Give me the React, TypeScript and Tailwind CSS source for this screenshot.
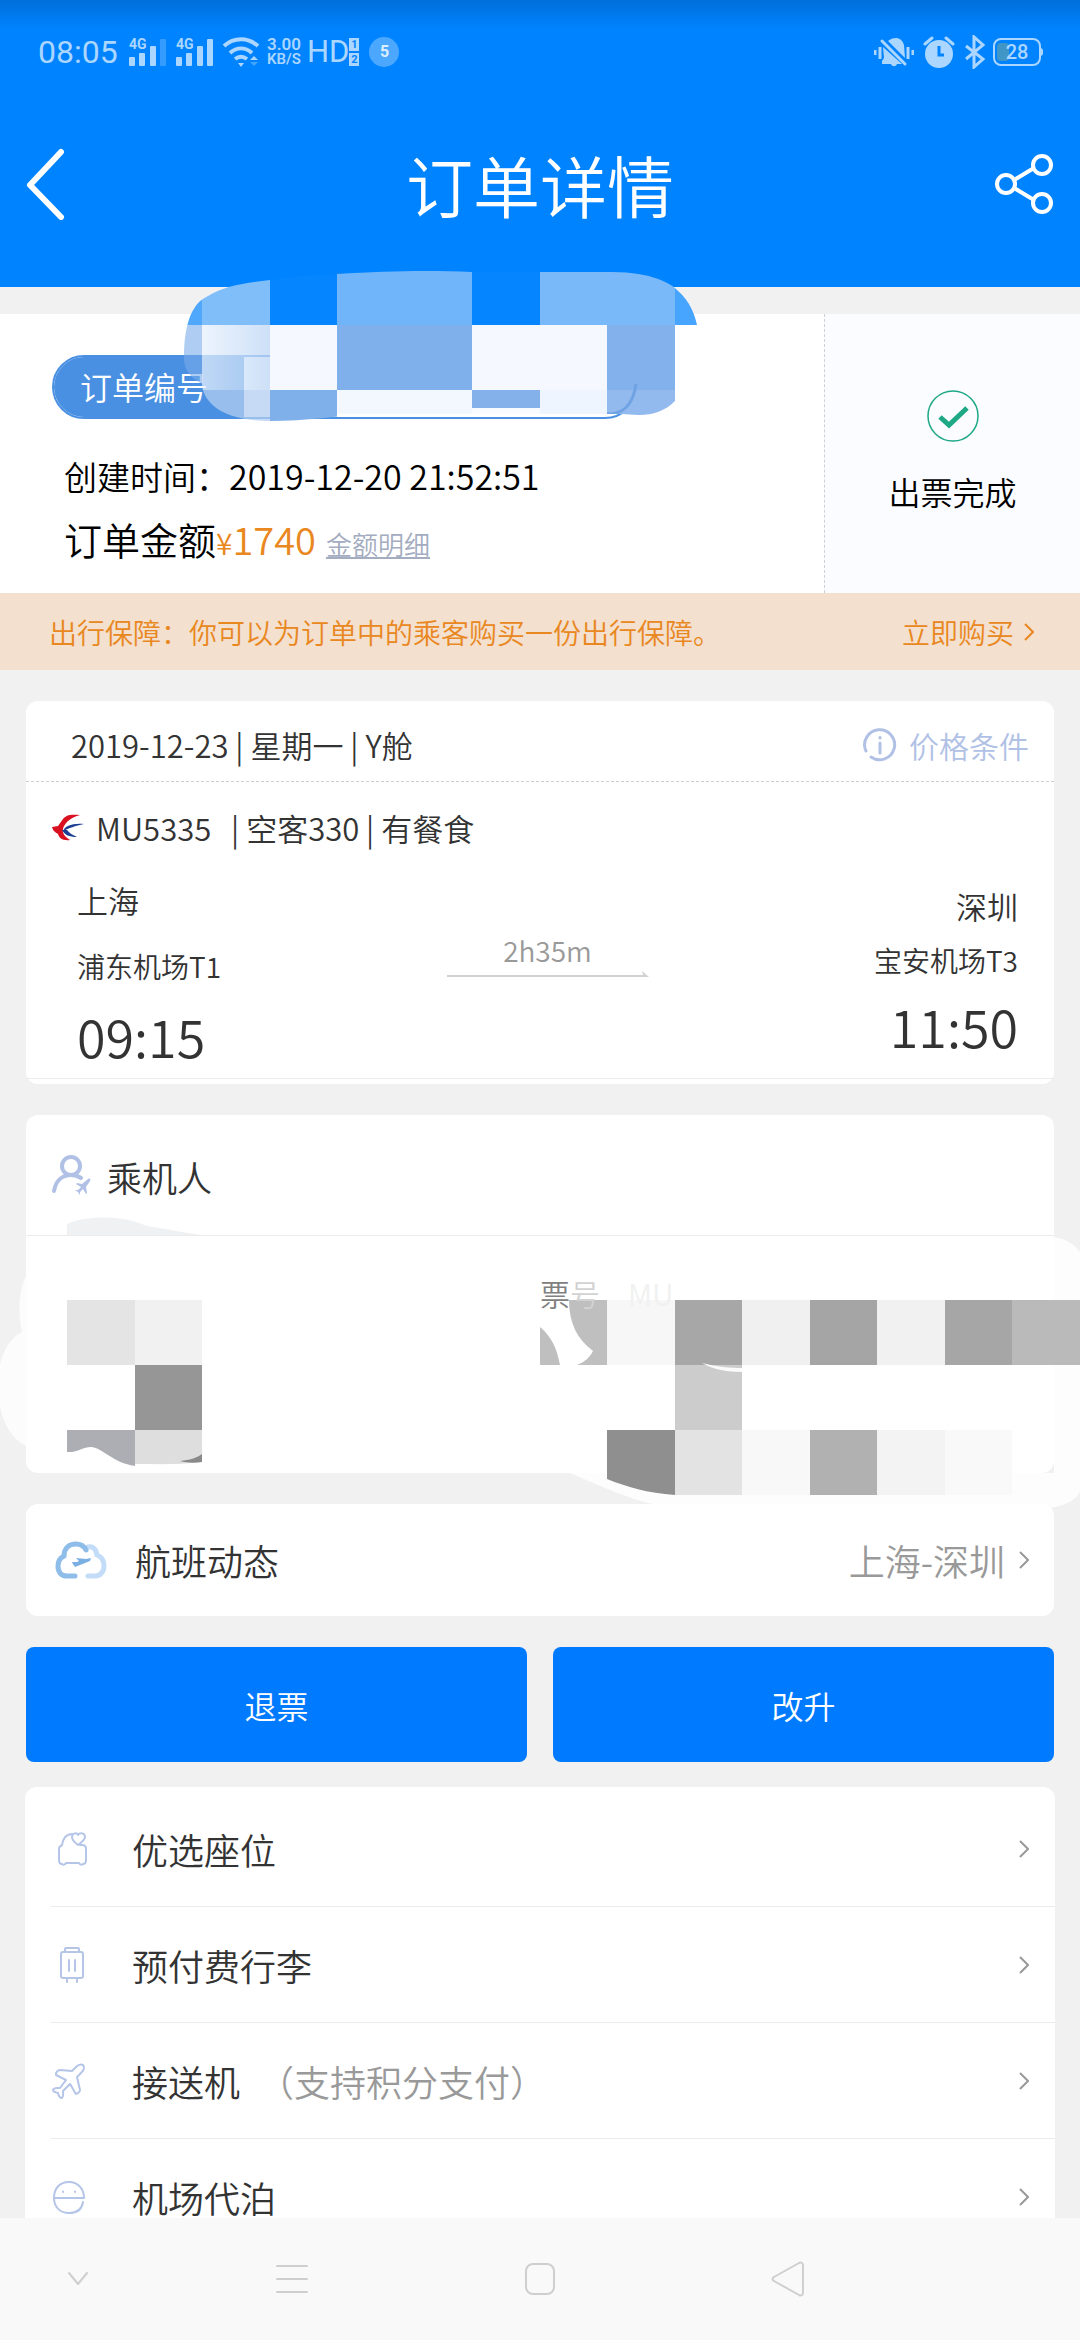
import React from 'react';

interface ServiceItem {
  label: string;
  note?: string;
  icon: React.ReactNode;
}

const iconStroke = {
  fill: 'none',
  stroke: 'currentColor',
  strokeWidth: 2,
  strokeLinecap: 'round' as const,
  strokeLinejoin: 'round' as const,
};

const SeatIcon = () => (
  <svg viewBox="-3 0 36 40" className="h-10 w-9" {...iconStroke}>
    <path d="M18 5c-6 0-9 5-10 11-2 1-3 2-3 4v11c0 2 1 4 3 4 1 1 3 1 4-1h13c1 2 3 2 4 1 2 0 3-2 3-4V20c0-3-2-4-4-4h-2" />
    <path d="M24 16c-4-3-6-5-6-8 0-4 5-5 6-2 2-3 7-2 7 2 0 3-3 5-7 8z" />
  </svg>
);

const LuggageIcon = () => (
  <svg viewBox="-3 0 36 40" className="h-10 w-9" {...iconStroke}>
    <rect x="7" y="7" width="22" height="26" rx="2" />
    <path d="M11 7V4c0-1 1-1 1-1h12s1 0 1 1v3M15 15v11M21 15v11M13 34v3M23 34v3" />
  </svg>
);

const PlaneIcon = () => (
  <svg viewBox="0 0 36 40" className="h-10 w-9" {...iconStroke}>
    <path d="M21 10l4-4c3-3 5-3 7-2 2 2 1 5-2 8l-4 4 3 13c0 2-3 4-4 4-1-1-5-9-6-10l-7 7c0 3 1 5-1 7-3 0-4-5-4-5s-5-1-5-3c1-3 4-2 7-2l6-8-10-5c-1-2 2-5 4-5z" />
  </svg>
);

const ParkingIcon = () => (
  <svg viewBox="0 0 36 40" className="h-10 w-9" {...iconStroke}>
    <path d="M33 21H3C3 11 9 5 18 5s15 7 15 16M3 21c0 9 6 15 15 15 8 0 13-4 14-11" />
    <path d="M12 14.5v.5M24 14.5v.5" />
  </svg>
);

const services: ServiceItem[] = [
  { label: '优选座位', icon: <SeatIcon /> },
  { label: '预付费行李', icon: <LuggageIcon /> },
  { label: '接送机', note: '（支持积分支付）', icon: <PlaneIcon /> },
  { label: '机场代泊', icon: <ParkingIcon /> },
];

const Chevron = ({ className }: { className: string }) => (
  <svg viewBox="0 0 10 18" className={className} fill="none" stroke="currentColor" strokeWidth="2">
    <path d="M1 1l8 8-8 8" />
  </svg>
);

const Signal = ({ weak }: { weak?: boolean }) => (
  <svg viewBox="0 0 38 30" className="h-[30px] w-[38px]" fill="currentColor">
    <text x="0" y="12" fontSize="14" fontWeight="700" fontFamily="Roboto, sans-serif">4G</text>
    <rect x="0" y="20" width="6" height="9" rx="1" />
    <rect x="10" y="16" width="6" height="13" rx="1" />
    <rect x="21" y="9" width="6" height="20" rx="1" />
    <rect x="31" y="2" width="6" height="27" rx="1" opacity={weak ? 0.3 : 1} />
  </svg>
);

const StatusBar = () => (
  <div className="flex h-[104px] items-center justify-between pr-[39px] pl-[38px] font-[Roboto,sans-serif] text-[#abd6ff]">
    <div className="flex items-center">
      <span className="w-[91px] text-[32px] leading-8">08:05</span>
      <Signal weak />
      <span className="w-[9px]" />
      <Signal />
      <svg viewBox="0 0 38 32" className="ml-2 h-8 w-[38px]" fill="none" stroke="currentColor" strokeWidth="4">
        <path d="M2 10c10-9 24-9 34 0M8 17c7-6 15-6 22 0M13 23c4-3 8-3 12 0" />
        <path d="M16 27h6l-3 4z" fill="currentColor" stroke="none" />
        <path d="M28 24l4-4 4 4z" fill="currentColor" stroke="none" />
        <path d="M28 26l4 4 4-4z" fill="currentColor" stroke="none" opacity="0.4" />
      </svg>
      <span className="ml-[6px] flex w-9 flex-col text-center text-[15px] leading-[15px] font-semibold">
        <span className="text-[17px] leading-[15px]">3.00</span>
        <span>KB/S</span>
      </span>
      <span className="ml-[5px] text-[31px] leading-8">HD</span>
      <span className="flex flex-col gap-[2px] text-[11px] leading-[13px] font-bold text-[#0083ff]">
        <span className="w-[10px] bg-[#abd6ff] text-center">1</span>
        <span className="w-[10px] bg-[#abd6ff] text-center">2</span>
      </span>
      <span className="ml-[10px] flex h-[30px] w-[30px] items-center justify-center rounded-full bg-[#4ca8ff] text-base font-bold text-[#dcefff]">5</span>
    </div>
    <div className="flex items-center">
      <svg viewBox="0 0 40 34" className="h-[34px] w-10" fill="currentColor">
        <path d="M14 6c6-5 14-4 16 4l1 13zM9 12l19 17h-5c-1 3-5 3-6 0H8v-3l2-3z" />
        <path d="M8 6l23 23" stroke="currentColor" strokeWidth="3" strokeLinecap="round" />
        <path d="M1 15v5M6 12v12M34 12v12M39 15v5" stroke="currentColor" strokeWidth="3" />
      </svg>
      <svg viewBox="0 0 32 34" className="ml-[9px] h-[34px] w-8" fill="currentColor">
        <circle cx="16" cy="19" r="14" />
        <path d="M2 9l7-6M30 9l-7-6" stroke="currentColor" strokeWidth="3" strokeLinecap="round" />
        <path d="M16 11v9h5" fill="none" stroke="#0083ff" strokeWidth="3" />
      </svg>
      <svg viewBox="0 0 22 34" className="ml-[9px] h-[34px] w-[22px]" fill="none" stroke="currentColor" strokeWidth="3">
        <path d="M2 11l17 13-9 8V2l9 8L2 24" />
      </svg>
      <span className="relative ml-[7px] flex h-7 w-12 items-center justify-center rounded-lg border-2 border-current text-xl leading-5 font-medium">
        <span className="absolute top-[3px] left-[2px] h-[18px] w-3 rounded bg-[#4196c8]" />
        <span className="relative">28</span>
        <span className="absolute top-2 -right-1 h-2 w-[3px] rounded-r bg-current" />
      </span>
    </div>
  </div>
);

const Header = () => (
  <header className="h-[287px] shrink-0 bg-[#0083ff] bg-linear-to-b from-[#006fdb] via-[#0083ff] via-10% to-[#0083ff] text-white">
    <StatusBar />
    <div className="grid h-[160px] grid-cols-[1fr_auto_1fr] items-center px-[26px]">
      <button aria-label="返回" className="w-10">
        <svg viewBox="0 0 40 72" className="h-[72px] w-10" fill="none" stroke="currentColor" strokeWidth="6" strokeLinecap="round" strokeLinejoin="round">
          <path d="M35 4L4 37l31 32" />
        </svg>
      </button>
      <h1 className="text-[67px] leading-[80px] font-[350]">订单详情</h1>
      <button aria-label="分享" className="justify-self-end">
        <svg viewBox="0 0 60 62" className="h-[62px] w-[60px]" fill="none" stroke="currentColor" strokeWidth="4">
          <circle cx="12" cy="31" r="9" />
          <circle cx="48" cy="12" r="9" />
          <circle cx="48" cy="50" r="9" />
          <path d="M20 27l20-12M20 35l20 12" />
        </svg>
      </button>
    </div>
  </header>
);

// Mosaic covering the order number
const OrderMask = () => (
  <svg viewBox="180 260 530 170" className="absolute -top-[54px] left-[180px] h-[170px] w-[530px]">
    <defs>
      <clipPath id="orderBrush">
        <path d="M184 358c0-30 6-54 24-62 16-10 36-13 62-16 24-4 42-5 67-6 50-3 90-4 135-2h140c40 0 60 12 65 18 14 12 18 26 20 35h-22v76c-10 10-22 14-36 14-14-1-20-1-32-1H367c-30 2-60 7-97 7-50 0-67-20-68-37-14-8-18-16-18-26z" />
      </clipPath>
      <linearGradient id="orderFade">
        <stop offset="0" stopColor="#e6f0fc" />
        <stop offset="1" stopColor="#bdd6f5" />
      </linearGradient>
    </defs>
    <g clipPath="url(#orderBrush)">
      <rect x="180" y="260" width="22" height="65" fill="#4fa8fb" />
      <rect x="202" y="260" width="68" height="65" fill="#80bef9" />
      <rect x="270" y="260" width="67" height="65" fill="#0585ff" />
      <rect x="337" y="260" width="135" height="65" fill="#70b5fa" />
      <rect x="472" y="260" width="68" height="65" fill="#0585ff" />
      <rect x="540" y="260" width="135" height="65" fill="#79b9fa" />
      <rect x="675" y="260" width="30" height="65" fill="#47a5ff" />
      <rect x="180" y="325" width="22" height="65" fill="#7aabe9" opacity="0.6" />
      <rect x="202" y="325" width="68" height="65" fill="url(#orderFade)" opacity="0.75" />
      <rect x="270" y="325" width="67" height="65" fill="#f5f9ff" />
      <rect x="337" y="325" width="135" height="65" fill="#7fb0eb" />
      <rect x="472" y="325" width="135" height="65" fill="#f5f8fe" />
      <rect x="607" y="325" width="68" height="65" fill="#82b1eb" />
      <rect x="202" y="390" width="68" height="40" fill="#b3cef2" opacity="0.75" />
      <rect x="270" y="390" width="67" height="40" fill="#7fb0ea" />
      <rect x="337" y="390" width="135" height="24" fill="#f3f8ff" />
      <rect x="472" y="390" width="68" height="18" fill="#84b1ea" />
      <rect x="472" y="408" width="68" height="6" fill="#f8fbff" />
      <rect x="540" y="390" width="67" height="24" fill="#eff5fe" />
      <rect x="607" y="390" width="68" height="28" fill="#92baee" />
      <path d="M607 414c16 0 26-8 29-30" fill="none" stroke="#6fa3e4" strokeWidth="3" />
    </g>
  </svg>
);

const OrderSummary = () => (
  <section className="relative mt-[27px] flex bg-white text-black">
    <div className="min-w-0 flex-1 pt-[41px] pb-[21px] pl-[52px]">
      <div className="flex h-16 w-[585px] overflow-hidden rounded-full border-2 border-[#4a90e2]">
        <span className="w-[190px] bg-[#4a90e2] pl-[26px] text-[32px] leading-[58px] font-[350] text-white">订单编号</span>
      </div>
      <p className="mt-[33px] pl-3 text-[33px] leading-[48px] font-[350]">
        创建时间：<time className="text-[34px]">2019-12-20 21:52:51</time>
      </p>
      <p className="mt-[11px] flex items-baseline pl-3 text-[38px] leading-[56px] font-[350]">
        订单金额
        <span className="text-[30px] text-[#e98720]">¥</span>
        <span className="text-[38px] text-[#e98720]">1740</span>
        <a href="#amount" className="ml-[10px] text-[26px] text-[#a3acc0] underline">金额明细</a>
      </p>
    </div>
    <div className="flex w-64 flex-col items-center border-l border-dashed border-[#cfd0d6] bg-[#fbfcff] pt-[75px]">
      <svg viewBox="0 0 54 54" className="h-[54px] w-[54px]" fill="none" stroke="#1fa886">
        <circle cx="27" cy="27" r="25" strokeWidth="1.5" />
        <path d="M14 28l9 8 18-17" strokeWidth="5" />
      </svg>
      <p className="mt-6 text-[32px] leading-[48px] font-[350]">出票完成</p>
    </div>
    <OrderMask />
  </section>
);

const FlightCard = () => (
  <section className="mx-[26px] mt-[31px] rounded-xl bg-white pb-[5px] font-[350] text-[#333]">
    <div className="flex h-[81px] items-center justify-between border-b border-dashed border-[#cfcfcf] pt-2 pr-[25px] pl-[45px]">
      <p className="text-[31px]">2019-12-23 | 星期一 | Y舱</p>
      <a href="#rules" className="flex items-center gap-3 text-[30px] text-[#b0c1e5]">
        <svg viewBox="0 0 34 34" className="h-[34px] w-[34px]" fill="none" stroke="currentColor" strokeWidth="3" strokeLinecap="round">
          <path d="M3 23a15 15 0 1 1 5 6" />
          <path d="M17 15v10M17 9.5v.5" />
        </svg>
        价格条件
      </a>
    </div>
    <div className="flex h-[92px] items-center pl-[26px] text-[31px]">
      <svg viewBox="0 0 32 28" className="h-7 w-8">
        <path d="M28 1C18 0 14 1 11 5l-5 7-6 1c1 4 3 5 6 7 1 4 5 7 12 6-5-3-8-7-7-11 1-5 6-11 17-14z" fill="#d8101f" />
        <path d="M32 10c-12-1-19 2-21 7 6-3 12-5 21-7z" fill="#1c3f94" />
        <path d="M10 16c3 5 7 7 15 7-4-2-8-4-10-7z" fill="#1c3f94" />
      </svg>
      <span className="ml-3 w-[135px]">MU5335</span>
      <span>| 空客330 | 有餐食</span>
    </div>
    <div className="grid grid-cols-[1fr_202px_1fr] pr-9 pb-3 pl-[51px]">
      <div className="pt-1">
        <p className="text-[31px] leading-[44px]">上海</p>
        <p className="mt-6 text-[28px] leading-10">浦东机场T1</p>
        <p className="mt-5 text-[52px] leading-[60px]">09:15</p>
      </div>
      <div className="pt-14 text-center text-[#999]">
        <p className="text-[28px] leading-10">2h35m</p>
        <svg viewBox="0 0 202 8" className="h-2 w-full" fill="#d2d2d2">
          <path d="M0 5h196l-1-4 7 6H0z" />
        </svg>
      </div>
      <div className="pt-[10px] text-right">
        <p className="text-[31px] leading-[44px]">深圳</p>
        <p className="mt-3 text-[28px] leading-10">宝安机场T3</p>
        <p className="mt-4 text-[52px] leading-[60px]">11:50</p>
      </div>
    </div>
    <hr className="border-[#ececec]" />
  </section>
);

// Mosaic covering the passenger's personal data
const PassengerMask = () => (
  <svg viewBox="0 1210 1080 300" className="absolute top-[95px] left-0 h-[300px] w-full">
    <path d="M26 1276c-8 16-8 40-4 56-34 16-32 98 4 114z" fill="#fff" opacity="0.75" />
    <path d="M1054 1237c12 2 20 7 26 15v240c-8 14-30 18-60 18H700c-50 0-90-20-130-37h484z" fill="#fff" opacity="0.85" />
    <path d="M67 1224c20-10 60-8 80 2 25 4 38 7 55 9H67z" fill="#f0f1f3" />
    <rect x="67" y="1300" width="68" height="65" fill="#e4e4e4" />
    <rect x="135" y="1300" width="67" height="65" fill="#f1f1f1" />
    <rect x="135" y="1365" width="67" height="65" fill="#969696" />
    <path d="M67 1430h68v36c-22-3-32-18-44-19-8 0-14 6-24 5z" fill="#adaeb4" />
    <path d="M135 1430h67v32c-24 3-45 2-67 2z" fill="#dedede" />
    <path d="M180 1461c10-1 16-3 22-7v8c-8 1-15 1-22-1z" fill="#8a8a8a" />
    <path d="M540 1327c12 10 17 22 20 38h-20zM569 1300h38v65h-30c8-3 13-8 16-14-16-12-24-28-24-51z" fill="#bfbfbf" />
    <rect x="607" y="1300" width="68" height="65" fill="#f7f7f7" />
    <rect x="675" y="1300" width="67" height="65" fill="#a7a7a7" />
    <rect x="742" y="1300" width="68" height="65" fill="#f0f0f0" />
    <rect x="810" y="1300" width="67" height="65" fill="#a5a5a5" />
    <rect x="877" y="1300" width="68" height="65" fill="#f1f1f1" />
    <rect x="945" y="1300" width="67" height="65" fill="#a6a6a6" />
    <rect x="1012" y="1300" width="68" height="65" fill="#bababa" />
    <rect x="675" y="1365" width="67" height="65" fill="#cccccc" />
    <path d="M702 1363c15 4 28 5 40 5v4c-16 0-30-3-40-9z" fill="#fafafa" />
    <path d="M607 1430h68v65c-28-2-48-8-68-16z" fill="#8f8f8f" />
    <rect x="675" y="1430" width="67" height="65" fill="#e3e3e3" />
    <rect x="742" y="1430" width="68" height="65" fill="#f8f8f8" />
    <rect x="810" y="1430" width="67" height="65" fill="#b1b1b1" />
    <rect x="877" y="1430" width="68" height="65" fill="#f3f3f3" />
    <rect x="945" y="1430" width="67" height="65" fill="#f9f9f9" />
  </svg>
);

const PassengerCard = () => (
  <section className="relative mt-[31px] px-[26px] font-[350]">
    <div className="rounded-xl bg-white">
      <div className="flex h-[121px] items-center border-b border-[#ececec] pl-[25px]">
        <svg viewBox="0 0 42 42" className="h-[42px] w-[42px] text-[#b0c1e5]" fill="none" stroke="currentColor" strokeWidth="4" strokeLinecap="round">
          <circle cx="20" cy="12" r="9" />
          <path d="M3 37c2-11 9-16 17-16 4 0 7 1 10 3" />
          <path d="M26 29l5 1 6-5c2-1 3 0 2 2l-4 6 1 6-1 1-3-5-3 3v3l-2-3-3-2h3l3-3-5-3z" fill="currentColor" stroke="none" />
        </svg>
        <h2 className="ml-[14px] pt-1 text-[35px] text-[#333]">乘机人</h2>
      </div>
      <div className="grid h-[237px] grid-cols-2 pt-[36px]">
        <p className="relative z-10 col-start-2 text-[30px] leading-[42px] text-[#808080]">
          票<span className="text-[#d2d2d2]">号</span>
          <span className="ml-7 text-[#f1f1f1]">MU</span>
        </p>
      </div>
    </div>
    <PassengerMask />
  </section>
);

const FlightStatus = () => (
  <a href="#status" className="mx-[26px] mt-[31px] flex h-28 items-center rounded-xl bg-white pr-[25px] pl-[29px] text-[36px] font-[350] text-[#333]">
    <svg viewBox="0 0 52 38" className="h-[38px] w-[52px]" fill="none" strokeWidth="5" strokeLinecap="round">
      <path d="M33 6c5-1 8 2 9 8 5 2 7 6 7 11 0 6-4 10-9 10h-7" stroke="#c3dcf7" />
      <path d="M20 35h-8c-6 0-9-4-9-10 0-5 2-8 6-10 0-8 5-12 12-12 5 0 8 2 10 6" stroke="#8fbdea" />
      <path d="M17 21l5 0 2-1-3-3 10 1 5-1-1 3-10 4-5 2-2-3z" fill="#79afe3" />
    </svg>
    <span className="ml-7 flex-1">航班动态</span>
    <span className="text-[#999]">上海-深圳</span>
    <Chevron className="ml-[14px] h-[18px] w-[10px] text-[#999]" />
  </a>
);

const ServiceList = () => (
  <ul className="mx-[25px] mt-[25px] rounded-t-xl bg-white pl-[26px] font-[350] text-[#333]">
    {services.map((item) => (
      <li key={item.label} className="border-b border-[#ebebeb] first:pt-1">
        <a href="#service" className="flex h-[115px] items-center pr-[26px] text-[36px]">
          <span className="w-[81px] text-[#b5c5e8]">{item.icon}</span>
          <span>{item.label}</span>
          {item.note && <span className="ml-[18px] text-[#999]">{item.note}</span>}
          <Chevron className="ml-auto h-[18px] w-[10px] text-[#999]" />
        </a>
      </li>
    ))}
  </ul>
);

const NavBar = () => (
  <nav className="grid h-[122px] shrink-0 grid-cols-[168px_1fr_1fr_1fr_168px] items-center justify-items-center bg-[#f9f9f9] text-[#cfcfcf]">
    <button aria-label="收起" className="justify-self-start pl-[67px]">
      <svg viewBox="0 0 22 16" className="h-4 w-[22px]" {...iconStroke}><path d="M2 2l9 11 9-11" /></svg>
    </button>
    <button aria-label="菜单">
      <svg viewBox="0 0 32 32" className="h-8 w-8" {...iconStroke}><path d="M1 3h30M1 16h30M1 29h30" /></svg>
    </button>
    <button aria-label="主页">
      <svg viewBox="0 0 32 32" className="h-8 w-8" {...iconStroke}><rect x="2" y="1" width="28" height="30" rx="7" /></svg>
    </button>
    <button aria-label="后退">
      <svg viewBox="0 0 34 36" className="h-9 w-[34px]" {...iconStroke}>
        <path d="M28 2c2-1 4 0 4 2v28c0 2-2 3-4 2L3 20c-2-1-2-3 0-4z" />
      </svg>
    </button>
  </nav>
);

const App: React.FC = () => {
  return (
    <div className="flex h-screen flex-col bg-[#f1f1f1] font-['Noto_Sans_CJK_SC',sans-serif]">
      <Header />
      <main className="min-h-0 flex-1 overflow-clip [overflow-clip-margin:20px]">
        <OrderSummary />
        <div className="flex h-[77px] items-center justify-between bg-[#f3e0cf] pr-[46px] pl-[49px] text-[28px] font-[350] text-[#e98720]">
          <p>出行保障：你可以为订单中的乘客购买一份出行保障。</p>
          <a href="#insurance" className="flex items-center gap-[10px]">
            立即购买
            <Chevron className="h-[18px] w-[10px]" />
          </a>
        </div>
        <FlightCard />
        <PassengerCard />
        <FlightStatus />
        <div className="mx-[26px] mt-[31px] grid grid-cols-2 gap-[26px] text-[32px] font-[350] text-white">
          <button className="h-[115px] rounded-lg bg-[#007aff]">退票</button>
          <button className="h-[115px] rounded-lg bg-[#007aff]">改升</button>
        </div>
        <ServiceList />
      </main>
      <NavBar />
    </div>
  );
};

export default App;
